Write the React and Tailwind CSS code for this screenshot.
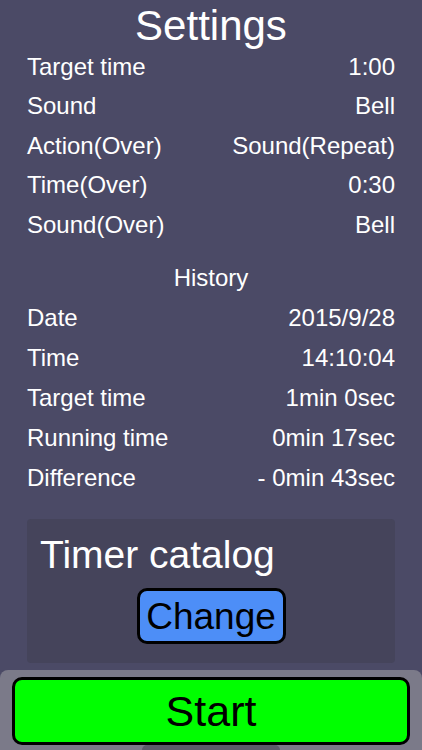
import React from 'react';

const settings = [
  ['Target time', '1:00'],
  ['Sound', 'Bell'],
  ['Action(Over)', 'Sound(Repeat)'],
  ['Time(Over)', '0:30'],
  ['Sound(Over)', 'Bell'],
];

const history = [
  ['Date', '2015/9/28'],
  ['Time', '14:10:04'],
  ['Target time', '1min 0sec'],
  ['Running time', '0min 17sec'],
  ['Difference', '- 0min 43sec'],
];

const Row = ({ label, value, h }) => (
  <div className={`flex items-center justify-between ${h}`}>
    <span>{label}</span>
    <span>{value}</span>
  </div>
);

export default function App() {
  return (
    <div
      className="w-[422px] h-[750px] bg-[#4b4a66] text-white flex flex-col overflow-hidden"
      style={{ fontFamily: '"Liberation Sans", Arial, sans-serif' }}
    >
      <div className="pt-[5px] px-[27px]">
        <h1 className="text-center text-[42px] leading-[42px] h-[42px]">Settings</h1>
        <div className="text-[24px] leading-none">
          {settings.map(([l, v]) => (
            <Row key={l} label={l} value={v} h="h-[39.5px]" />
          ))}
        </div>
        <div className="mt-[13.5px] h-[40px] flex items-center justify-center text-[24px] leading-none">History</div>
        <div className="text-[24px] leading-none">
          {history.map(([l, v]) => (
            <Row key={l} label={l} value={v} h="h-[40px]" />
          ))}
        </div>
        <div className="mt-[21px] h-[144px] rounded-[4px] bg-[#45445b] flex flex-col">
          <div className="pl-[13px] pt-[15px] text-[39px] leading-[42px]">Timer catalog</div>
          <div className="flex justify-center mt-[12px]">
            <button className="w-[149px] h-[56px] rounded-[10px] border-[3px] border-black bg-[#4d8ef7] text-black text-[37px] leading-none">
              Change
            </button>
          </div>
        </div>
      </div>
      <div className="mt-[7px] flex-1 bg-[#7b7a89] rounded-t-[8px] flex flex-col items-center pt-[7px] relative">
        <button className="w-[398px] h-[68px] rounded-[10px] border-[3px] border-black bg-[#00ff00] text-black text-[43px] leading-none">
          Start
        </button>
        <div className="absolute bottom-0 left-[142px] w-[138px] h-[5px] rounded-t-[6px] bg-[#5c5b6a]" />
      </div>
    </div>
  );
}
